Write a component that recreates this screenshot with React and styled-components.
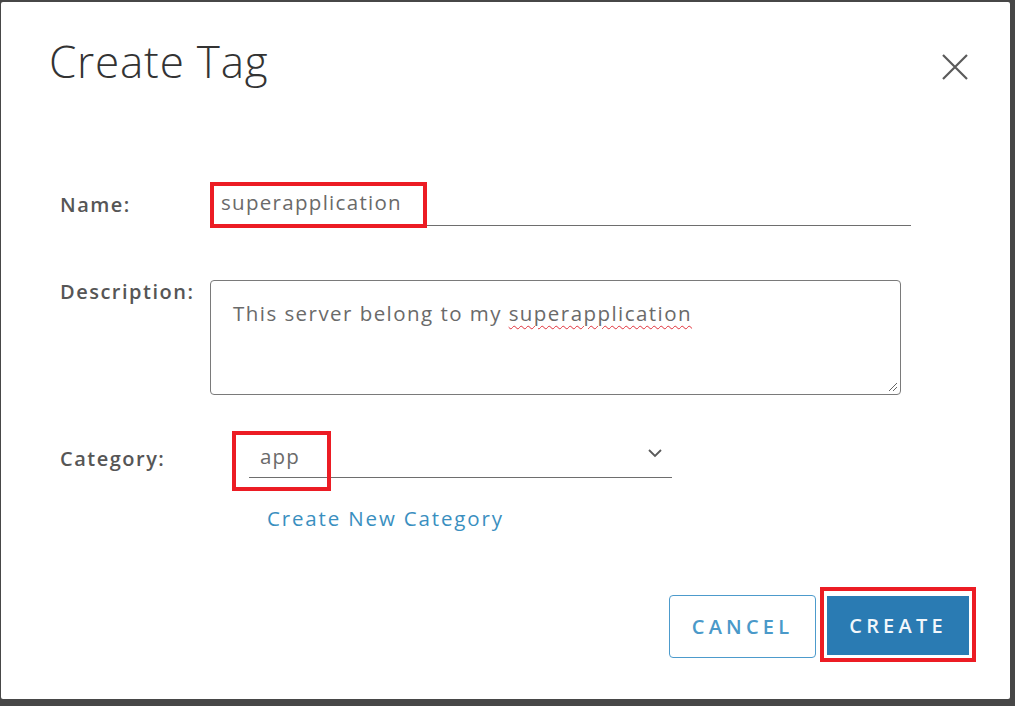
import React from "react";
import styled, { createGlobalStyle } from "styled-components";

const Global = createGlobalStyle`
  html, body { margin: 0; padding: 0; }
  body { background: #474747; font-family: "Open Sans", sans-serif; }
  *, *::before, *::after { box-sizing: border-box; }
`;

const Backdrop = styled.div`
  width: 1015px;
  height: 706px;
  background: #474747;
  padding: 2px 0 0 1px;
`;

const Dialog = styled.div`
  width: 1009px;
  height: 697px;
  background: #ffffff;
  border-radius: 2px;
  display: flex;
  flex-direction: column;
`;

const Header = styled.div`
  display: flex;
  justify-content: space-between;
  align-items: flex-start;
  padding: 30px 40px 0 48px;
`;

const Title = styled.h1`
  margin: 0;
  font-family: "Open Sans", sans-serif;
  font-weight: 300;
  font-size: 44px;
  line-height: 58px;
  letter-spacing: 0.8px;
  color: #333;
`;

const CloseButton = styled.button`
  border: none;
  background: none;
  padding: 0;
  margin-top: 20px;
  width: 30px;
  height: 30px;
  display: flex;
  align-items: center;
  justify-content: center;
  cursor: pointer;
`;

const Form = styled.div`
  display: flex;
  flex-direction: column;
  padding: 0 0 0 59px;
  margin-top: 92px;
`;

const Row = styled.div`
  display: grid;
  grid-template-columns: 150px 1fr;
  align-items: ${(p) => p.$align || "start"};
  margin-top: ${(p) => p.$mt || 0}px;
`;

const Label = styled.label`
  font-family: "Open Sans", sans-serif;
  font-weight: 600;
  font-size: 20px;
  letter-spacing: 1.5px;
  color: #565656;
  padding-top: ${(p) => p.$pt || 0}px;
  margin-top: ${(p) => p.$mt || 0}px;
`;

const Annotated = styled.div`
  position: relative;
  &::after {
    content: "";
    position: absolute;
    left: ${(p) => p.$l}px;
    top: ${(p) => p.$t}px;
    width: ${(p) => p.$w}px;
    height: ${(p) => p.$h}px;
    border: 4px solid #ec1c24;
    pointer-events: none;
  }
`;

const LineInput = styled.div`
  width: 701px;
  height: 44px;
  border-bottom: 1.5px solid #6e6e6e;
  padding: 6px 0 0 11px;
  font-family: "Open Sans", sans-serif;
  font-size: 20.5px;
  letter-spacing: 1.3px;
  color: #6a6a6a;
`;

const TextArea = styled.div`
  position: relative;
  width: 691px;
  height: 115px;
  border: 1.5px solid #7a7a7a;
  border-radius: 4px;
  padding: 18px 22px;
  font-family: "Open Sans", sans-serif;
  font-size: 20.5px;
  letter-spacing: 1.45px;
  color: #6a6a6a;
`;

const Squiggle = styled.span`
  text-decoration: underline wavy #e0303a;
  text-decoration-thickness: 1px;
  text-underline-offset: 4px;
`;

const Grip = styled.svg`
  position: absolute;
  right: 2px;
  bottom: 2px;
`;

const FieldColumn = styled.div`
  display: flex;
  flex-direction: column;
  padding-left: 39px;
`;

const Select = styled.div`
  width: 423px;
  height: 47px;
  border-bottom: 1.5px solid #6e6e6e;
  display: flex;
  justify-content: space-between;
  align-items: center;
  padding: 4px 10px 0 11px;
  font-family: "Open Sans", sans-serif;
  font-size: 20.5px;
  letter-spacing: 1.1px;
  color: #6a6a6a;
`;

const Chevron = styled.svg`
  margin-top: -6px;
`;

const Link = styled.a`
  margin-top: 26px;
  margin-left: 18px;
  font-family: "Open Sans", sans-serif;
  font-size: 20.5px;
  letter-spacing: 1.85px;
  color: #3a8fbf;
  text-decoration: none;
`;

const Footer = styled.div`
  display: flex;
  justify-content: flex-end;
  gap: 11px;
  padding: 0 41px 0 0;
  margin-top: 63px;
`;

const Button = styled.button`
  height: ${(p) => (p.$primary ? 59 : 63)}px;
  width: ${(p) => (p.$primary ? 142 : 147)}px;
  margin-top: ${(p) => (p.$primary ? 1 : 0)}px;
  border-radius: ${(p) => (p.$primary ? 0 : 4)}px;
  border: ${(p) => (p.$primary ? "none" : "1.5px solid #4d9bcc")};
  background: ${(p) => (p.$primary ? "#2a7bb3" : "#ffffff")};
  color: ${(p) => (p.$primary ? "#f2f7fb" : "#4a99c9")};
  font-family: "Open Sans", sans-serif;
  font-weight: 600;
  font-size: 20px;
  letter-spacing: 4.2px;
  padding: 0;
  cursor: pointer;
`;

export default function App() {
  return (
    <>
      <Global />
      <Backdrop>
        <Dialog>
          <Header>
            <Title>Create Tag</Title>
            <CloseButton aria-label="Close">
              <svg width="26" height="26" viewBox="0 0 26 26">
                <path d="M1 1 L25 25 M25 1 L1 25" stroke="#5a5a5a" strokeWidth="2.2" fill="none" />
              </svg>
            </CloseButton>
          </Header>
          <Form>
            <Row $align="center">
              <Label>Name:</Label>
              <Annotated $l={0} $t={0} $w={217} $h={46}>
                <LineInput>superapplication</LineInput>
              </Annotated>
            </Row>
            <Row $mt={54}>
              <Label $mt={-2}>Description:</Label>
              <TextArea>
                This server belong to my <Squiggle>superapplication</Squiggle>
                <Grip width="12" height="12" viewBox="0 0 12 12">
                  <path d="M11 3 L3 11 M11 7 L7 11" stroke="#666" strokeWidth="1" />
                </Grip>
              </TextArea>
            </Row>
            <Row $mt={36}>
              <Label $pt={14}>Category:</Label>
              <FieldColumn>
                <Annotated $l={-17} $t={0} $w={99} $h={60}>
                  <Select>
                    <span>app</span>
                    <Chevron width="14" height="9" viewBox="0 0 14 9">
                      <path d="M1 1 L7 7 L13 1" stroke="#5a5a5a" strokeWidth="1.8" fill="none" />
                    </Chevron>
                  </Select>
                </Annotated>
                <Link href="#">Create New Category</Link>
              </FieldColumn>
            </Row>
          </Form>
          <Footer>
            <Button>CANCEL</Button>
            <Annotated $l={-7} $t={-8} $w={156} $h={75}>
              <Button $primary>CREATE</Button>
            </Annotated>
          </Footer>
        </Dialog>
      </Backdrop>
    </>
  );
}
